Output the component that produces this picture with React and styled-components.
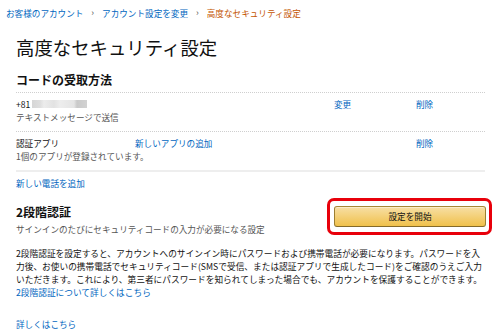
import styled, { createGlobalStyle } from "styled-components";

const GlobalStyle = createGlobalStyle`
  html, body {
    margin: 0;
    padding: 0;
    background: #fff;
  }
  body {
    font-family: "Noto Sans CJK JP", "Liberation Sans", sans-serif;
    color: #111;
    width: 500px;
    height: 336px;
    overflow: hidden;
  }
`;

const Page = styled.div`
  width: 500px;
  height: 336px;
  font-size: 8.6px;
  line-height: 12.5px;
`;

const Crumbs = styled.div`
  display: flex;
  align-items: center;
  gap: 8px;
  padding: 7px 6px 0;
  height: 12px;
  line-height: 12px;
`;

const Crumb = styled.a`
  color: ${(p) => (p.$current ? "#c45500" : "#0066c0")};
  text-decoration: none;
`;

const Sep = styled.span`
  color: #555;
  font-size: 9px;
`;

const Content = styled.div`
  padding: 0 15px 0 16px;
`;

const Title = styled.h1`
  margin: 16px 0 0;
  font-size: 18.4px;
  line-height: 24px;
  font-weight: 400;
  color: #111;
`;

const SectionTitle = styled.h2`
  margin: ${(p) => p.$top || "13px"} 0 0;
  font-size: 12px;
  line-height: 16px;
  font-weight: 700;
`;

const Head = styled.div`
  padding-bottom: 4px;
  border-bottom: 1px dotted #cfcfcf;
`;

const Row = styled.div`
  display: grid;
  grid-template-columns: 119px 199px 82px 1fr;
  padding: 5px 0 8px;
  border-bottom: ${(p) => (p.$last ? "2px solid #eee" : "1px dotted #cfcfcf")};
`;

const Cell = styled.div`
  display: flex;
  flex-direction: column;
  white-space: nowrap;
`;

const Link = styled.a`
  color: #0066c0;
  text-decoration: none;
`;

const Muted = styled.div`
  color: #555;
`;

const Phone = styled.div`
  display: flex;
  align-items: center;
  gap: 1px;
`;

const Blur = styled.span`
  display: inline-block;
  width: 55px;
  height: 8px;
  margin-left: 1px;
  background: linear-gradient(
    90deg,
    #d6d6d6 0,
    #dedede 8px,
    #ececec 12px,
    #e2e2e2 22px,
    #ededed 28px,
    #e4e4e4 42px,
    #c9c9c9 45px,
    #d2d2d2 55px
  );
`;

const AddPhone = styled.div`
  padding-top: 5px;
`;

const TwoStep = styled.div`
  display: flex;
  justify-content: space-between;
  align-items: flex-start;
  margin-top: 14px;
`;

const TwoStepText = styled.div`
  display: flex;
  flex-direction: column;
`;

const Sub = styled.div`
  margin-top: 3.5px;
  color: #555;
`;

const ButtonWrap = styled.div`
  position: relative;
  margin-top: 2px;
  margin-right: -1px;
`;

const Highlight = styled.div`
  position: absolute;
  left: -7px;
  top: -8px;
  right: -6px;
  bottom: -8px;
  border: 3px solid #e8000b;
  border-radius: 7px;
  pointer-events: none;
`;

const StartButton = styled.button`
  width: 152px;
  height: 21px;
  display: flex;
  align-items: center;
  justify-content: center;
  font-family: inherit;
  font-size: 8.6px;
  color: #111;
  background: linear-gradient(to bottom, #f7dfa5, #f0c14b);
  border: 1px solid;
  border-color: #a88734 #9c7e31 #846a29;
  border-radius: 3px;
  box-shadow: inset 0 1px 0 rgba(255, 255, 255, 0.4);
  padding: 0;
`;

const Para = styled.p`
  margin: 11px 0 0;
  width: 469px;
  font-size: 8.7px;
  line-height: 13px;
  color: #111;
`;

const More = styled.div`
  margin-top: 19px;
`;

export default function App() {
  return (
    <Page>
      <GlobalStyle />
      <Crumbs>
        <Crumb>お客様のアカウント</Crumb>
        <Sep>›</Sep>
        <Crumb>アカウント設定を変更</Crumb>
        <Sep>›</Sep>
        <Crumb $current>高度なセキュリティ設定</Crumb>
      </Crumbs>
      <Content>
        <Title>高度なセキュリティ設定</Title>
        <Head>
          <SectionTitle>コードの受取方法</SectionTitle>
        </Head>
        <Row>
          <Cell>
            <Phone>
              +81
              <Blur />
            </Phone>
            <Muted>テキストメッセージで送信</Muted>
          </Cell>
          <Cell />
          <Cell>
            <Link>変更</Link>
          </Cell>
          <Cell>
            <Link>削除</Link>
          </Cell>
        </Row>
        <Row $last>
          <Cell>
            <span>認証アプリ</span>
            <Muted>1個のアプリが登録されています。</Muted>
          </Cell>
          <Cell>
            <Link>新しいアプリの追加</Link>
          </Cell>
          <Cell />
          <Cell>
            <Link>削除</Link>
          </Cell>
        </Row>
        <AddPhone>
          <Link>新しい電話を追加</Link>
        </AddPhone>
        <TwoStep>
          <TwoStepText>
            <SectionTitle $top="0">2段階認証</SectionTitle>
            <Sub>サインインのたびにセキュリティコードの入力が必要になる設定</Sub>
          </TwoStepText>
          <ButtonWrap>
            <StartButton>設定を開始</StartButton>
            <Highlight />
          </ButtonWrap>
        </TwoStep>
        <Para>
          2段階認証を設定すると、アカウントへのサインイン時にパスワードおよび携帯電話が必要になります。パスワードを入力後、お使いの携帯電話でセキュリティコード(SMSで受信、または認証アプリで生成したコード)をご確認のうえご入力いただきます。これにより、第三者にパスワードを知られてしまった場合でも、アカウントを保護することができます。
          <br />
          <Link>2段階認証について詳しくはこちら</Link>
        </Para>
        <More>
          <Link>詳しくはこちら</Link>
        </More>
      </Content>
    </Page>
  );
}
